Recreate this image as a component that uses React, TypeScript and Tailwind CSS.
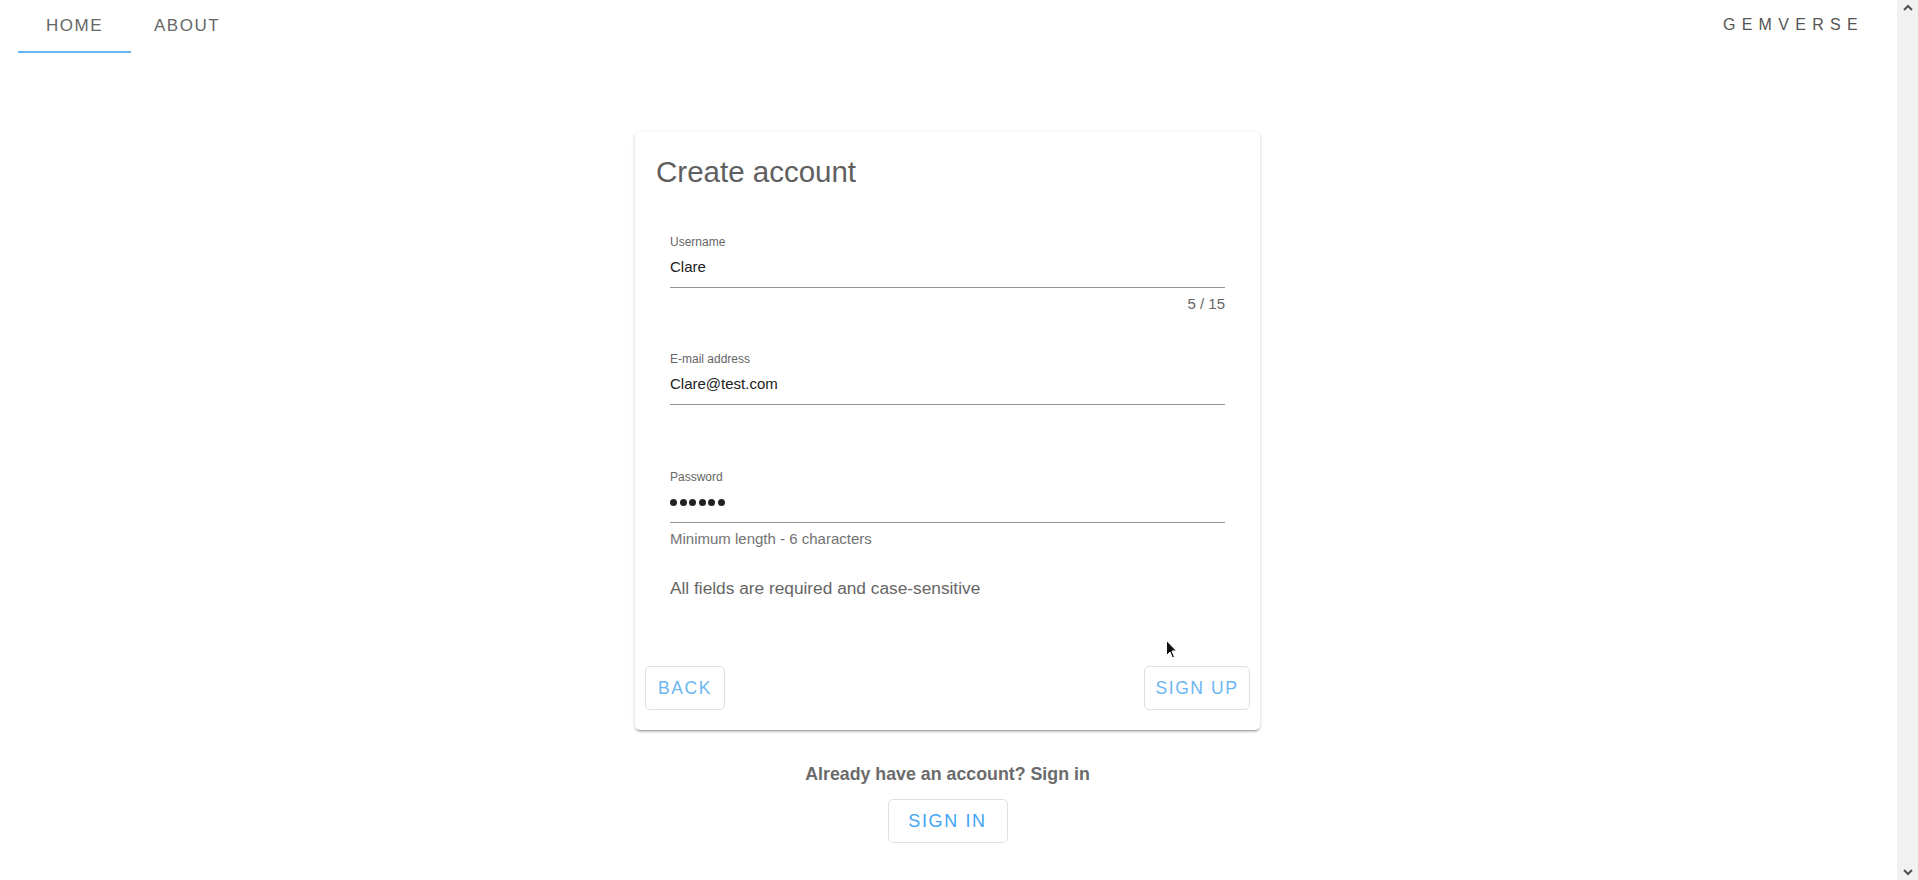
import React from "react";

const font = { fontFamily: '"Liberation Sans", Arial, sans-serif' };

type FieldProps = {
  label: string;
  value?: string;
  password?: boolean;
  counter?: string;
  hint?: string;
  height: string;
};

function Field({ label, value, password, counter, hint, height }: FieldProps) {
  return (
    <div className={`flex flex-col ${height}`}>
      <div className="text-[12px] leading-[14px] text-[#666]">{label}</div>
      <div className="mt-[8px] pb-[10px] border-b border-[#949494]">
        {password ? (
          <div className="flex h-[20px] items-center gap-[2.6px] pt-[1px]">
            {[0, 1, 2, 3, 4, 5].map((i) => (
              <span key={i} className="block w-[7px] h-[7px] rounded-full bg-[#222]" />
            ))}
          </div>
        ) : (
          <div className="h-[20px] text-[15px] leading-[20px] text-[#212121]">{value}</div>
        )}
      </div>
      <div className="pt-[7px] h-[25px] flex justify-between text-[15px] leading-[18px]">
        <span className="text-[#727272]">{hint}</span>
        <span className="text-[#666]">{counter}</span>
      </div>
    </div>
  );
}

function Scrollbar() {
  return (
    <div className="w-[21px] h-full bg-[#f1f1f1] flex flex-col justify-between items-center py-[4px]">
      <svg width="10" height="7" viewBox="0 0 10 7">
        <path d="M1 6 L5 2 L9 6" fill="none" stroke="#505050" strokeWidth="2" />
      </svg>
      <svg width="10" height="7" viewBox="0 0 10 7">
        <path d="M1 1 L5 5 L9 1" fill="none" stroke="#505050" strokeWidth="2" />
      </svg>
    </div>
  );
}

export default function App() {
  return (
    <div className="relative flex w-full h-[880px] overflow-hidden bg-white" style={font}>
      <div className="flex-1 flex flex-col">
        {/* top bar */}
        <div className="flex justify-between items-start h-[53px]">
          <div className="flex pl-[18px]">
            <div className="w-[113px] flex flex-col">
              <div className="h-[51px] flex items-center justify-center text-[17px] tracking-[0.09em] text-[#666] uppercase">
                Home
              </div>
              <div className="h-[2px] bg-[#64b5f6]" />
            </div>
            <div className="w-[112px] h-[51px] flex items-center justify-center text-[17px] tracking-[0.09em] text-[#666] uppercase">
              About
            </div>
          </div>
          <div className="h-[49px] flex items-center pr-[33px] text-[16px] tracking-[6.3px] text-[#555]">
            GEMVERSE
          </div>
        </div>

        <div className="pr-[2px]">
          {/* card */}
          <div className="mt-[79px] w-[625px] mx-auto bg-white rounded-[5px] shadow-[0_3px_1px_-2px_rgba(0,0,0,0.2),0_2px_2px_0_rgba(0,0,0,0.14),0_1px_5px_0_rgba(0,0,0,0.12)]">
            <div className="pt-[22px] pl-[21px] h-[58px] text-[29.5px] leading-[36px] text-[#5f5f5f]">
              Create account
            </div>
            <div className="mt-[45px] px-[35px]">
              <Field label="Username" value="Clare" counter="5 / 15" height="h-[117px]" />
              <Field label="E-mail address" value="Clare@test.com" height="h-[118px]" />
              <Field label="Password" password hint="Minimum length - 6 characters" height="h-[78px]" />
              <div className="mt-[28px] text-[17.3px] leading-[24px] text-[#666]">
                All fields are required and case-sensitive
              </div>
            </div>
            <div className="mt-[66px] px-[10px] pb-[20px] flex justify-between">
              <button className="w-[80px] h-[44px] border border-[#e0e0e0] rounded-[5px] text-[17.5px] tracking-[0.09em] text-[#6cb6f2] uppercase">
                Back
              </button>
              <button className="w-[106px] h-[44px] border border-[#e0e0e0] rounded-[5px] text-[17.5px] tracking-[0.09em] text-[#6cb6f2] uppercase">
                Sign up
              </button>
            </div>
          </div>

          {/* below card */}
          <div className="mt-[32px] flex flex-col items-center">
            <div className="text-[17.8px] leading-[24px] font-bold text-[#6b6b6b]">
              Already have an account? Sign in
            </div>
            <button className="mt-[13px] w-[120px] h-[44px] border border-[#e0e0e0] rounded-[5px] text-[18px] tracking-[0.09em] text-[#42a5f5] uppercase">
              Sign in
            </button>
          </div>
        </div>
      </div>
      <Scrollbar />

      {/* mouse pointer */}
      <svg className="absolute left-[1166px] top-[640px]" width="12" height="19" viewBox="0 0 12 19">
        <path d="M0.5 0.5 L0.5 15.5 L4 12 L6.5 18 L8.5 17 L6 11 L10.5 11 Z" fill="#111" stroke="#fff" strokeWidth="1" />
      </svg>
    </div>
  );
}
